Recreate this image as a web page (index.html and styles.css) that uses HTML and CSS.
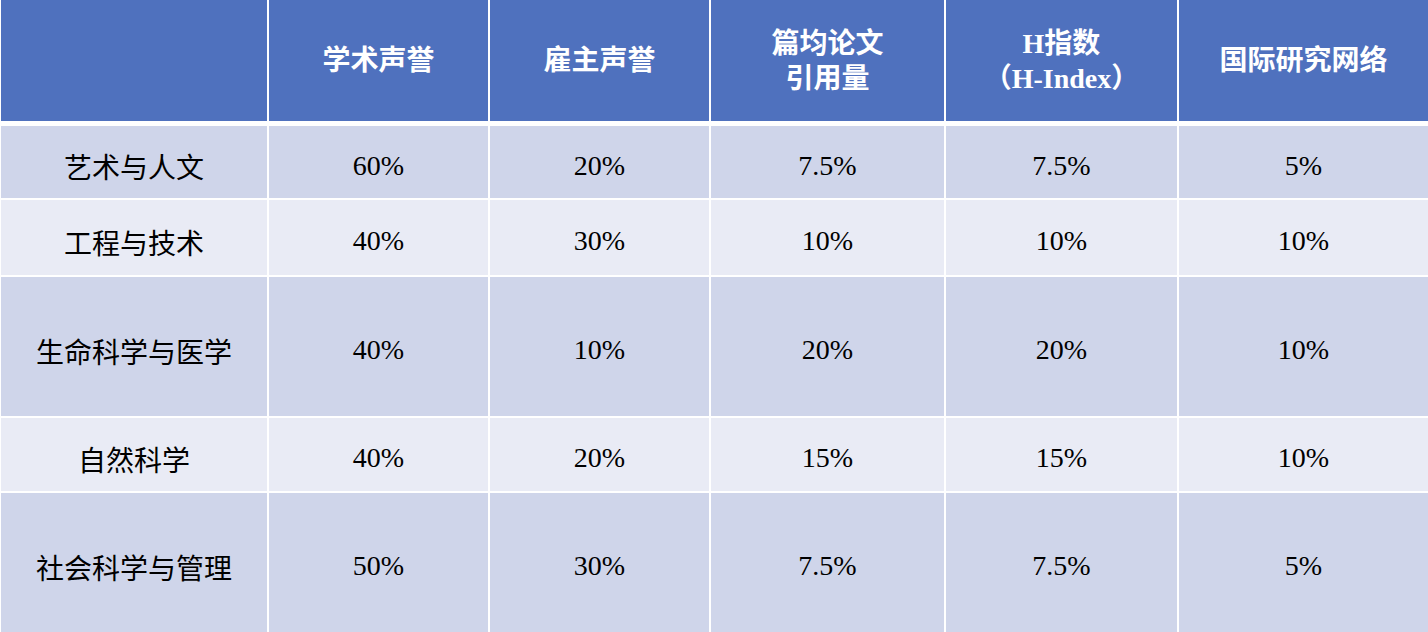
FILE: index.html
```html
<!DOCTYPE html>
<html lang="zh-CN">
<head>
<meta charset="utf-8">
<title>QS 学科排名指标权重</title>
<link rel="stylesheet" href="styles.css">
</head>
<body>
<div class="table">
  <div class="cell head"></div>
  <div class="cell head">学术声誉</div>
  <div class="cell head">雇主声誉</div>
  <div class="cell head">篇均论文<br>引用量</div>
  <div class="cell head">H指数<br>（H-Index）</div>
  <div class="cell head">国际研究网络</div>

  <div class="cell odd label">艺术与人文</div>
  <div class="cell odd num">60%</div>
  <div class="cell odd num">20%</div>
  <div class="cell odd num">7.5%</div>
  <div class="cell odd num">7.5%</div>
  <div class="cell odd num">5%</div>

  <div class="cell even label">工程与技术</div>
  <div class="cell even num">40%</div>
  <div class="cell even num">30%</div>
  <div class="cell even num">10%</div>
  <div class="cell even num">10%</div>
  <div class="cell even num">10%</div>

  <div class="cell odd label">生命科学与医学</div>
  <div class="cell odd num">40%</div>
  <div class="cell odd num">10%</div>
  <div class="cell odd num">20%</div>
  <div class="cell odd num">20%</div>
  <div class="cell odd num">10%</div>

  <div class="cell even label">自然科学</div>
  <div class="cell even num">40%</div>
  <div class="cell even num">20%</div>
  <div class="cell even num">15%</div>
  <div class="cell even num">15%</div>
  <div class="cell even num">10%</div>

  <div class="cell odd label">社会科学与管理</div>
  <div class="cell odd num">50%</div>
  <div class="cell odd num">30%</div>
  <div class="cell odd num">7.5%</div>
  <div class="cell odd num">7.5%</div>
  <div class="cell odd num">5%</div>
</div>
</body>
</html>
```

FILE: styles.css
```css
html, body {
  margin: 0;
  padding: 0;
  background: #ffffff;
}

body {
  width: 1428px;
  height: 632px;
  overflow: hidden;
}

.table {
  display: grid;
  grid-template-columns: 266px 219px 219px 233px 231px 249px;
  grid-template-rows: 124px 72px 75px 139px 73px 139px;
  column-gap: 2px;
  row-gap: 2px;
  padding-left: 1px;
  background: #ffffff;
  font-family: "Liberation Serif", "Noto Sans CJK SC", serif;
}

.cell {
  display: flex;
  align-items: center;
  justify-content: center;
  text-align: center;
  font-size: 28px;
  line-height: 35px;
  color: #000000;
}

.head {
  margin-bottom: 3px;
  background: #4f71be;
  color: #ffffff;
  font-weight: bold;
}

.label {
  padding-top: 13px;
}

.num {
  padding-top: 6px;
}

.odd {
  background: #cfd5ea;
}

.even {
  background: #e9ebf5;
}
```
